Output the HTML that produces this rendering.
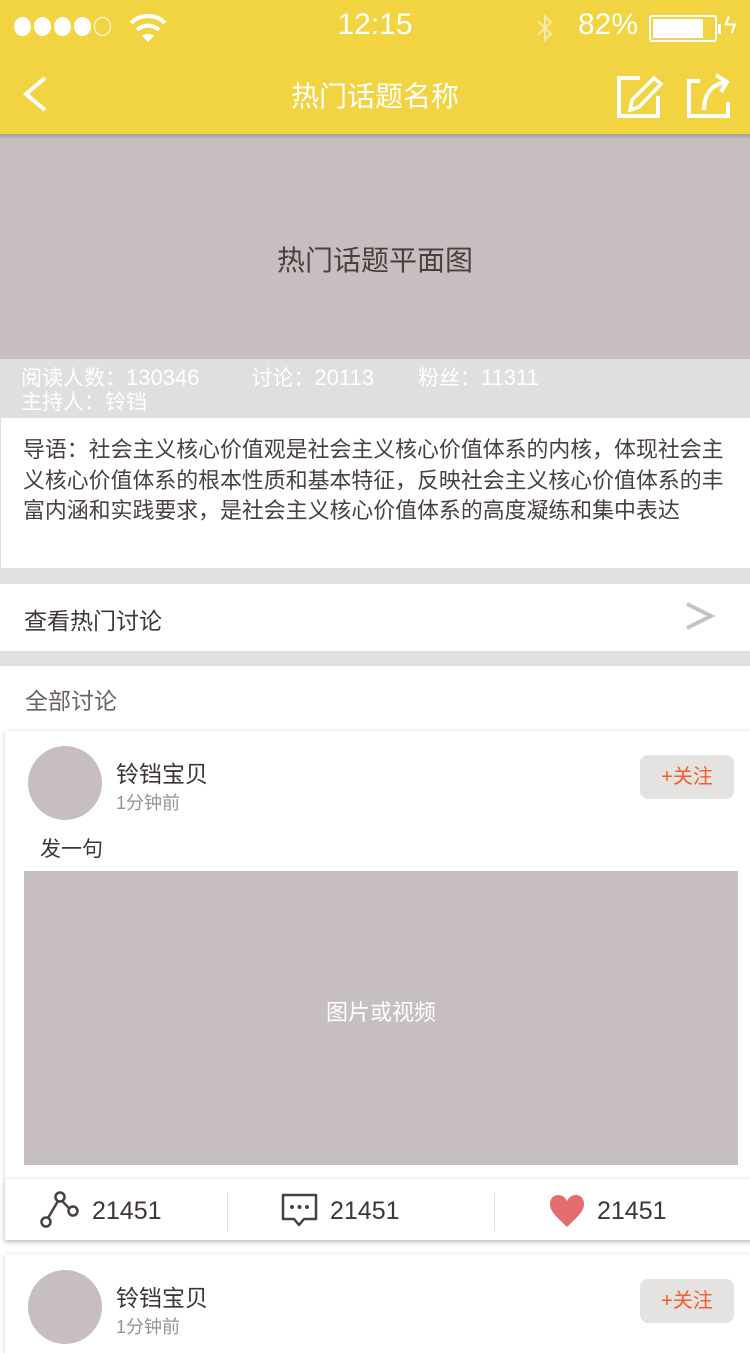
<!DOCTYPE html>
<html><head><meta charset="utf-8"><style>
*{margin:0;padding:0;box-sizing:border-box}
body{width:750px;height:1334px;overflow:hidden;background:#fff;font-family:"Liberation Sans","Noto Sans CJK SC",sans-serif;position:relative;color:#4a4040}
.a{position:absolute}
</style></head><body>
<div class="a" style="left:0;top:0;width:750px;height:134px;background:#f2d443"></div>
<div class="a" style="left:0;top:134px;width:750px;height:5px;background:linear-gradient(#a89e9e,#c6bebf)"></div>
<!-- status -->
<div class="a" style="left:14px;top:17px;display:flex;gap:3px">
<span style="width:17px;height:19px;border-radius:50%;background:#fff"></span><span style="width:17px;height:19px;border-radius:50%;background:#fff"></span><span style="width:17px;height:19px;border-radius:50%;background:#fff"></span><span style="width:17px;height:19px;border-radius:50%;background:#fff"></span><span style="width:17px;height:19px;border-radius:50%;border:1.5px solid #fff"></span></div>
<svg class="a" style="left:128px;top:12px" width="40" height="32" viewBox="0 0 40 32"><path d="M3 11 A24 24 0 0 1 37 11" stroke="#fff" stroke-width="4" fill="none"/><path d="M9 18 A16 16 0 0 1 31 18" stroke="#fff" stroke-width="4" fill="none"/><path d="M14 24 L20 30 L26 24 A9 9 0 0 0 14 24Z" fill="#fff"/></svg>
<div class="a" style="left:0;width:750px;top:8px;text-align:center;color:#fff;font-size:30px">12:15</div>
<svg class="a" style="left:535px;top:12px" width="20" height="32"><path d="M3 9 L16 22 L10 28 V4 L16 10 L3 23" stroke="#f8e9a0" stroke-width="2" fill="none"/></svg>
<div class="a" style="left:578px;top:8px;color:#fff;font-size:30px">82%</div>
<div class="a" style="left:649px;top:15px;width:68px;height:27px;border:2px solid #fff;border-radius:3px;padding:2px"><div style="width:50px;height:100%;background:#fff"></div></div>
<div class="a" style="left:718px;top:24px;width:3px;height:10px;background:#fff"></div>
<div class="a" style="left:724px;top:12px;color:#fff;font-size:24px">ϟ</div>
<!-- nav -->
<svg class="a" style="left:20px;top:76px" width="30" height="36"><path d="M25 2 L6 18 L25 34" stroke="#fff" stroke-width="4" fill="none"/></svg>
<div class="a" style="left:0;width:750px;top:75px;text-align:center;color:#fff;font-size:28px">热门话题名称</div>
<svg class="a" style="left:614px;top:72px" width="52" height="46"><path d="M26 6 H5 V44 H44 V24" stroke="#fff" stroke-width="4" fill="none"/><path d="M16 38 L18 28 L40 6 L47 12 L25 35Z" stroke="#fff" stroke-width="3.5" fill="none"/></svg>
<svg class="a" style="left:684px;top:72px" width="48" height="46"><path d="M16 9 H5 V44 H44 V30" stroke="#fff" stroke-width="4" fill="none"/><path d="M20 38 C20 22 28 12 42 10" stroke="#fff" stroke-width="4" fill="none"/><path d="M32 3 L43 10 L37 20" stroke="#fff" stroke-width="4" fill="none"/></svg>
<!-- banner -->
<div class="a" style="left:0;top:139px;width:750px;height:220px;background:#c6bebf"></div>
<div class="a" style="left:0;width:750px;top:239px;text-align:center;font-size:28px;color:#4a4040">热门话题平面图</div>
<div class="a" style="left:0;top:359px;width:750px;height:59px;background:#e1dedf;color:#fff;font-size:21px;line-height:24px;padding:7px 0 0 21px">阅读人数：<span style="font-size:22px">130346</span><span style="margin-left:52px">讨论：<span style="font-size:22px">20113</span></span><span style="margin-left:44px">粉丝：<span style="font-size:22px">11311</span></span><br>主持人：铃铛</div>
<div class="a" style="left:0;top:418px;width:750px;height:150px;border-left:1px solid #ddd;padding:17px 0 0 22px;font-size:21.9px;line-height:30.5px;color:#4a4040;white-space:nowrap">导语：社会主义核心价值观是社会主义核心价值体系的内核，体现社会主<br>义核心价值体系的根本性质和基本特征，反映社会主义核心价值体系的丰<br>富内涵和实践要求，是社会主义核心价值体系的高度凝练和集中表达</div>
<div class="a" style="left:0;top:568px;width:750px;height:16px;background:#e1dfdf"></div>
<div class="a" style="left:24px;top:602px;font-size:23px;color:#3f3636">查看热门讨论</div>
<svg class="a" style="left:684px;top:600px" width="32" height="34"><path d="M3 4 L27 16 L3 28" stroke="#c4c2c2" stroke-width="4" fill="none"/></svg>
<div class="a" style="left:0;top:651px;width:750px;height:15px;background:#e1dfdf"></div>
<div class="a" style="left:25px;top:682px;font-size:23px;color:#6a6262">全部讨论</div>
<!-- card 1 -->
<div class="a" style="left:5px;top:731px;width:760px;height:509px;background:#fff;box-shadow:0 1px 5px rgba(0,0,0,.18)"></div>
<div class="a" style="left:28px;top:746px;width:74px;height:74px;border-radius:50%;background:#c6bebf"></div>
<div class="a" style="left:116px;top:755px;font-size:23px;color:#3f3636">铃铛宝贝</div>
<div class="a" style="left:116px;top:789px;font-size:18px;color:#9a9292">1分钟前</div>
<div class="a" style="left:640px;top:755px;width:94px;height:44px;border-radius:8px;background:#e5e2e2;color:#f0602a;font-size:20px;text-align:center;line-height:44px">+关注</div>
<div class="a" style="left:40px;top:833px;font-size:21px;color:#3f3636">发一句</div>
<div class="a" style="left:24px;top:871px;width:714px;height:294px;background:#c6bebf;color:#fff;font-size:22px;text-align:center;line-height:284px">图片或视频</div>
<div class="a" style="left:5px;top:1178px;width:760px;height:62px;background:#fff;box-shadow:0 2px 5px rgba(0,0,0,.15);border-top:1px solid #eee"></div>
<svg class="a" style="left:38px;top:1190px" width="44" height="40"><circle cx="22" cy="7" r="4.5" stroke="#4a4040" stroke-width="2.5" fill="none"/><circle cx="8" cy="32" r="4.5" stroke="#4a4040" stroke-width="2.5" fill="none"/><circle cx="35" cy="21" r="4.5" stroke="#4a4040" stroke-width="2.5" fill="none"/><path d="M20 11 L10 28 M24 11 L31 18" stroke="#4a4040" stroke-width="2.5"/></svg>
<div class="a" style="left:92px;top:1197px;font-size:25px;color:#3f3636">21451</div>
<div class="a" style="left:227px;top:1193px;width:1px;height:38px;background:#ddd"></div>
<svg class="a" style="left:280px;top:1192px" width="40" height="40"><path d="M3 3 H36 V27 H24 L19 33 L14 27 H3Z" stroke="#4a4040" stroke-width="2.5" fill="none" stroke-linejoin="round"/><circle cx="12" cy="15" r="2" fill="#4a4040"/><circle cx="19.5" cy="15" r="2" fill="#4a4040"/><circle cx="27" cy="15" r="2" fill="#4a4040"/></svg>
<div class="a" style="left:330px;top:1197px;font-size:25px;color:#3f3636">21451</div>
<div class="a" style="left:494px;top:1193px;width:1px;height:38px;background:#ddd"></div>
<svg class="a" style="left:548px;top:1194px" width="38" height="34"><path d="M19 33 C10 24 2 18 2 10 C2 4 6 1 10 1 C14 1 17 3 19 7 C21 3 24 1 28 1 C32 1 36 4 36 10 C36 18 28 24 19 33Z" fill="#e46c6c"/></svg>
<div class="a" style="left:597px;top:1197px;font-size:25px;color:#3f3636">21451</div>
<!-- card 2 -->
<div class="a" style="left:5px;top:1254px;width:760px;height:100px;background:#fff;box-shadow:0 1px 5px rgba(0,0,0,.18)"></div>
<div class="a" style="left:28px;top:1270px;width:74px;height:74px;border-radius:50%;background:#c6bebf"></div>
<div class="a" style="left:116px;top:1279px;font-size:23px;color:#3f3636">铃铛宝贝</div>
<div class="a" style="left:116px;top:1313px;font-size:18px;color:#9a9292">1分钟前</div>
<div class="a" style="left:640px;top:1279px;width:94px;height:44px;border-radius:8px;background:#e5e2e2;color:#f0602a;font-size:20px;text-align:center;line-height:44px">+关注</div>
</body></html>
